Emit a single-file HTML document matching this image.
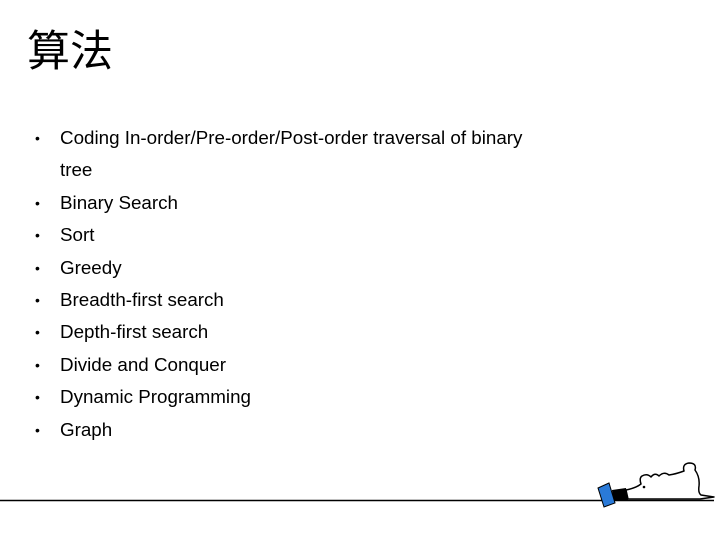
<!DOCTYPE html>
<html><head><meta charset="utf-8"><style>
body{margin:0;width:720px;height:540px;background:#fff;position:relative;overflow:hidden;font-family:"Liberation Sans","Noto Sans CJK SC",sans-serif;color:#000}
h1{position:absolute;left:27px;top:18px;margin:0;font-size:43px;font-weight:normal;font-family:"Noto Sans CJK SC",sans-serif;line-height:60px}
ul{position:absolute;left:0;top:122px;margin:0;padding:0;list-style:none;font-size:18.8px;line-height:32.4px}
li{position:relative;padding-left:60px;width:495px}
li:before{content:"•";position:absolute;left:35px;font-size:14px}
</style></head><body>
<h1>算法</h1>
<ul>
<li>Coding In-order/Pre-order/Post-order traversal of binary tree</li>
<li>Binary Search</li>
<li>Sort</li>
<li>Greedy</li>
<li>Breadth-first search</li>
<li>Depth-first search</li>
<li>Divide and Conquer</li>
<li>Dynamic Programming</li>
<li>Graph</li>
</ul>
<svg style="position:absolute;left:0;top:0" width="720" height="540">
<line x1="0" y1="500.5" x2="714" y2="500.5" stroke="#000" stroke-width="1.5"/>
<path d="M626 490 Q636 488 641 484 Q639 478 642 476 Q647 473 651 477 Q655 472 659 476 Q664 471 669 475 Q676 474 684 471 Q682 464 689 463 Q697 463 695 470 Q700 477 699 486 Q698 493 701 495 L714 497 L700 499 L628 499 Z" fill="#fff" stroke="#000" stroke-width="1.5" stroke-linejoin="round"/>
<path d="M612 490 L626 488 L628 500 L613 501 Z" fill="#000"/>
<circle cx="644" cy="487" r="1.3" fill="#000"/>
<path d="M598 488 L609 483 L615 503 L604 507 Z" fill="#2a7ad8" stroke="#000" stroke-width="1"/>
</svg>
</body></html>
